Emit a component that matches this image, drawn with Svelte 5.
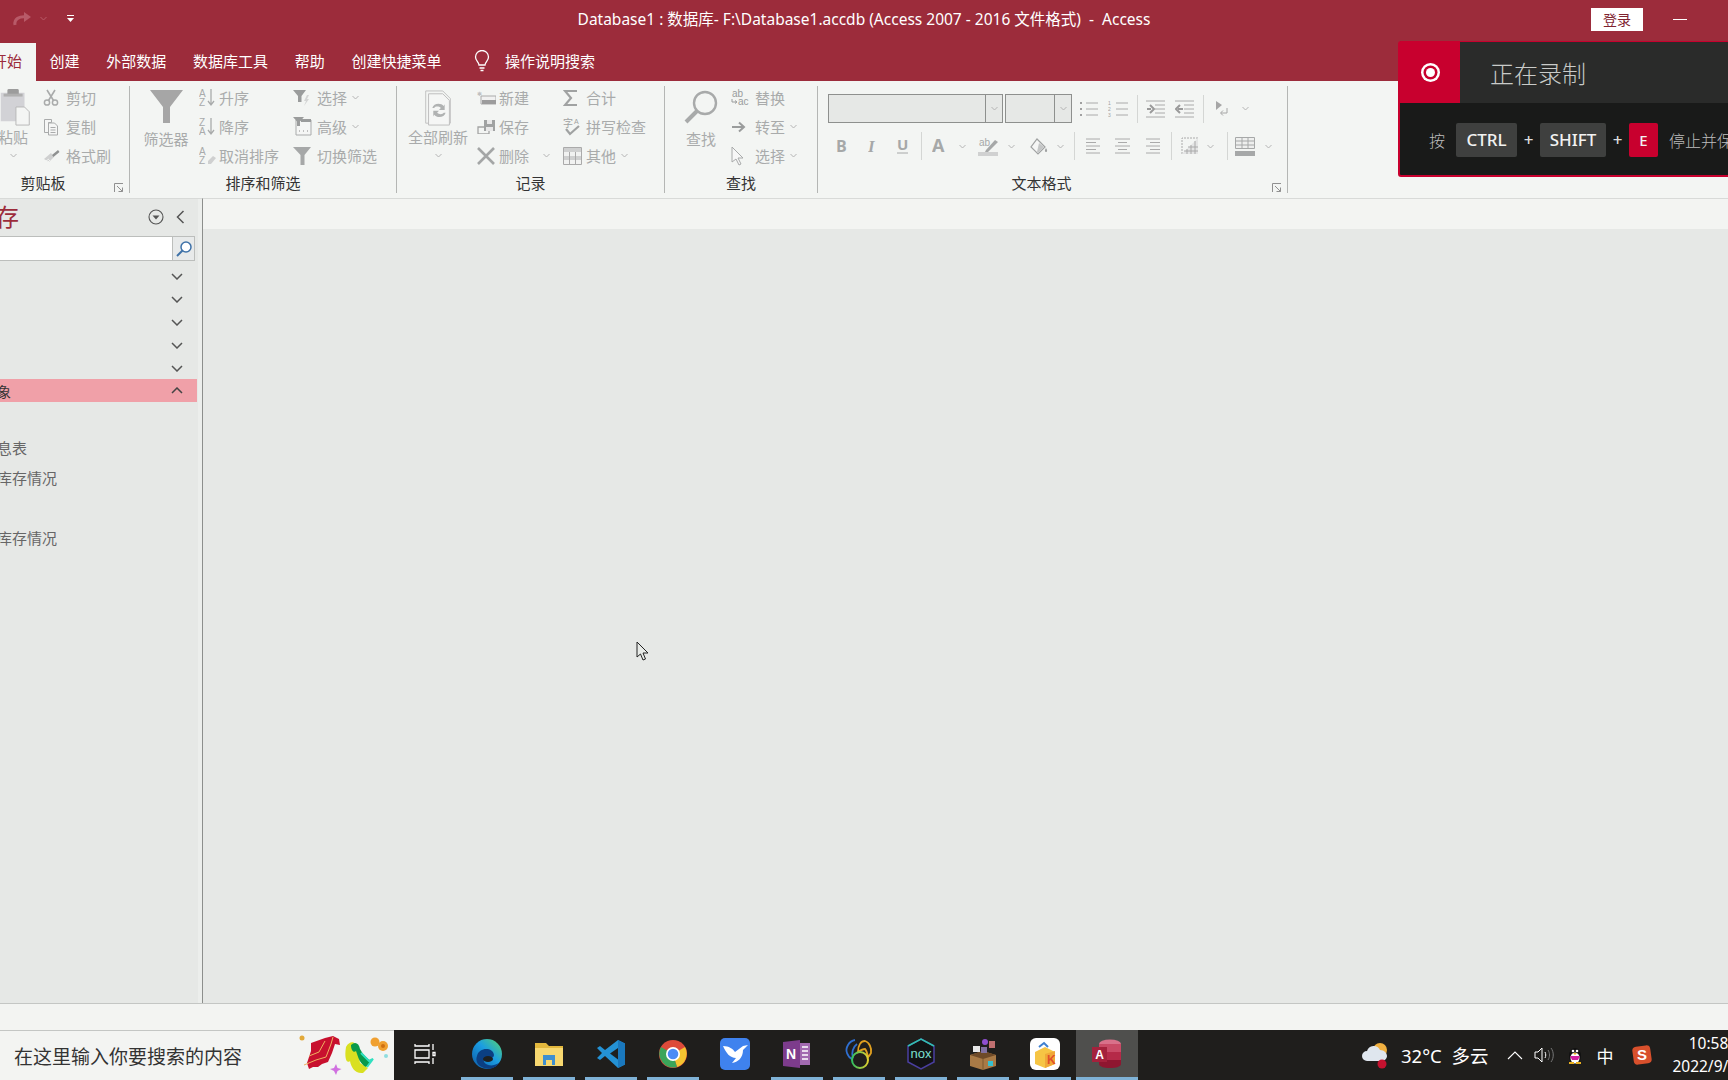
<script>
  const g = '#a9abab';
  const icons = {
    cut: `<circle cx="4" cy="13.5" r="2.6" fill="none" stroke="${g}" stroke-width="1.5"/><circle cx="12" cy="13.5" r="2.6" fill="none" stroke="${g}" stroke-width="1.5"/><path d="M5.5 11.5 12 1M10.5 11.5 4 1" stroke="${g}" stroke-width="1.6" fill="none"/>`,
    copy: `<path d="M1.5 1.5h7v3h-3v10h-4zM5.5 5h6l3 3v9h-9z" fill="#f5f6f5" stroke="${g}"/><path d="M7.5 9.5h5M7.5 12h5M7.5 14.5h5" stroke="${g}"/>`,
    brush: `<path d="M1 11 8 5l3 4-5 5z" fill="#cfd0d0"/><path d="M9 7l6-5 1.5 2-6 5z" fill="#8f9191"/><path d="M3 13l3-2M5 14l2-2" stroke="#f3f5f3"/>`,
    paste: `<rect x="2" y="5" width="25" height="30" fill="#d2d2d6"/><rect x="9" y="1" width="12" height="7" rx="1.5" fill="#9c9c9c"/><rect x="5" y="6" width="20" height="3" fill="#b0b0b0"/><path d="M18 20h9l5 5v14H18z" fill="#f4f5f4" stroke="#b6b6b6"/>`,
    funnel: `<path d="M0 0h33L20 17v16h-7V17z" fill="#a6a6a6"/>`,
    asc: `<text x="0" y="8.5" font-size="10" font-family="Liberation Sans" fill="${g}">A</text><text x="0" y="18" font-size="10" font-family="Liberation Sans" fill="${g}">Z</text><path d="M12 1v15M9 13l3 4 3-4" stroke="${g}" stroke-width="1.3" fill="none"/>`,
    desc: `<text x="0" y="8.5" font-size="10" font-family="Liberation Sans" fill="${g}">Z</text><text x="0" y="18" font-size="10" font-family="Liberation Sans" fill="${g}">A</text><path d="M12 1v15M9 13l3 4 3-4" stroke="${g}" stroke-width="1.3" fill="none"/>`,
    clearsort: `<text x="0" y="8.5" font-size="10" font-family="Liberation Sans" fill="${g}">A</text><text x="0" y="18" font-size="10" font-family="Liberation Sans" fill="${g}">Z</text><path d="M9 15l5-5 3 2-5 6h-3z" fill="#cfd0d0"/>`,
    select: `<path d="M0 1h13L8.5 7v6H5V7z" fill="#9a9c9c"/><path d="M14 6l-3 6h2l-2 5 5-7h-2l2-4z" fill="#d4d5d5"/>`,
    adv: `<path d="M3 3h15v15H3z" fill="#f5f6f5" stroke="${g}"/><path d="M8 2h10v3H8z" fill="#9a9c9c"/><path d="M0 0h11L7 4.500V9H4V4.500z" fill="#9a9c9c"/><path d="M6 14h1M10 14h1M14 14h1" stroke="#888"/>`,
    toggle: `<path d="M0 0h18L11.500 8v10h-4V8z" fill="#a6a8a8"/>`,
    refresh: `<path d="M1 1h18l8 8v26H1z" fill="none" stroke="#c0c0c0"/><path d="M4 4h15l7 7v26H4z" fill="#f5f6f5" stroke="#bcbcbc"/><path d="M8 19c1-5 9-6 12-2l1-2v6h-6l2-2c-2-2-6-2-7 0zM22 24c-1 5-9 6-12 2l-1 2v-6h6l-2 2c2 2 6 2 7 0z" fill="#b0b2b2"/>`,
    newrec: `<path d="M4 6h15v8H4z" fill="#f1f1f1" stroke="#aaa"/><path d="M5 10h14v4H5z" fill="#9c9c9c"/><text x="0" y="6" font-size="6" fill="#c0c0c0" font-family="Liberation Sans">✱</text>`,
    save: `<path d="M1 8h11v7H1z" fill="none" stroke="#a4a4a4" stroke-width="1.3"/><path d="M7 1h11v11H7z" fill="#a0a2a2"/><path d="M10 1h5v4h-5z" fill="#e8e8e8"/><path d="M9 8h7v4H9z" fill="#e8e8e8"/>`,
    del: `<path d="M1 1l16 16M17 1 1 17" stroke="#a4a6a6" stroke-width="2.6"/>`,
    sigma: `<path d="M14 2H2l6 7-6 7h12" fill="none" stroke="#a0a2a2" stroke-width="2.2"/>`,
    spell: `<text x="0" y="10" font-size="10" font-family="Noto Sans CJK SC" fill="#a0a2a2">字</text><text x="11" y="7" font-size="7" font-family="Liberation Sans" fill="#a0a2a2">A</text><path d="M3 12l4 5 9-8" fill="none" stroke="#a0a2a2" stroke-width="2.2"/>`,
    other: `<path d="M.5.500h18v17H.5z" fill="#f1f2f1" stroke="#aaa"/><path d="M1 1h17v4H1zM1 9h17v4H1z" fill="#cfd0d0"/><path d="M6.500 5v12M12.500 5v12" stroke="#aaa"/>`,
    glass: `<circle cx="21" cy="13" r="11" fill="none" stroke="#a8aaaa" stroke-width="2.4"/><path d="M13 21 2 32" stroke="#a8aaaa" stroke-width="4"/>`,
    replace: `<text x="1" y="8" font-size="10" font-family="Liberation Sans" fill="#9a9c9c">ab</text><text x="7" y="16" font-size="10" font-family="Liberation Sans" fill="#9a9c9c">ac</text><path d="M1 10v3h4M4 11.500l2 1.500-2 1.500" fill="none" stroke="#9a9c9c"/>`,
    goto: `<path d="M1 8h11M8 3.500 13 8l-5 4.500" fill="none" stroke="#9a9c9c" stroke-width="2"/>`,
    pointer: `<path d="M1 1v15l4-3 3 6 2-1-3-6h5z" fill="#f7f7f7" stroke="#a8aaaa"/>`,
    bullets: `<path d="M2 2h2v2H2zM2 8h2v2H2zM2 14h2v2H2z" fill="#a0a0a0"/><path d="M8 3h12M8 9h12M8 15h12" stroke="#aaa"/>`,
    numbers: `<text x="0" y="5" font-size="5" fill="#a0a0a0" font-family="Liberation Sans">1</text><text x="0" y="11" font-size="5" fill="#a0a0a0" font-family="Liberation Sans">2</text><text x="0" y="17" font-size="5" fill="#a0a0a0" font-family="Liberation Sans">3</text><path d="M8 3h12M8 9h12M8 15h12" stroke="#aaa"/>`,
    indent: `<path d="M0 1h19M9 5h10M9 9h10M9 13h10M0 17h19" stroke="#aaa"/><path d="M1 9h4M4 5l4 4-4 4" stroke="#9a9a9a" stroke-width="2" fill="none"/>`,
    outdent: `<path d="M0 1h19M9 5h10M9 9h10M9 13h10M0 17h19" stroke="#aaa"/><path d="M8 9H3M5 5 1 9l4 4" stroke="#9a9a9a" stroke-width="2" fill="none"/>`,
    rtl: `<path d="M1 0l6 4-6 5z" fill="#a6a6a6"/><path d="M12 7v5H6M8 9.500 5.500 12 8 14.500" fill="none" stroke="#a6a6a6"/>`,
    bold: `<text x="0" y="14" font-size="16" font-weight="700" font-family="Open Sans" fill="#a6a8a8">B</text>`,
    italic: `<text x="0" y="14" font-size="17" font-style="italic" font-weight="700" font-family="Liberation Serif" fill="#a6a8a8">I</text>`,
    under: `<text x="0" y="12" font-size="15" font-weight="700" font-family="Open Sans" fill="#a6a8a8">U</text><path d="M0 15h11" stroke="#a6a8a8"/>`,
    fontc: `<text x="0" y="14" font-size="18" font-weight="700" font-family="Open Sans" fill="#a6a8a8">A</text>`,
    hilite: `<text x="1" y="9" font-size="10" font-family="Liberation Sans" fill="#a6a8a8">ab</text><path d="M8 13 17 3l3 2-10 10H7z" fill="#a6a8a8"/><path d="M0 15h20v4H0z" fill="#d0d1d1"/>`,
    fill: `<path d="M8 1 16 9l-7 7-7-7z" fill="#f5f6f5" stroke="#a0a2a2" stroke-width="1.2"/><path d="M10 5l5 4-6 6-1-1z" fill="#c4c6c6"/><path d="M17 10c1.500 2 1.500 4 0 4s-1.500-2 0-4z" fill="#a0a2a2"/>`,
    left: `<path d="M0 1h14M0 4.500h10M0 8h14M0 11.500h10M0 15h14" stroke="#aaa"/>`,
    center: `<path d="M0 1h15M3 4.500h9M0 8h15M3 11.500h9M0 15h15" stroke="#aaa"/>`,
    right: `<path d="M0 1h14M4 4.500h10M0 8h14M4 11.500h10M0 15h14" stroke="#aaa"/>`,
    alt: `<path d="M1 17V1h16" fill="none" stroke="#aaa" stroke-dasharray="2 1"/><path d="M1 17 17 1v16z" fill="#e4e5e5"/><path d="M6 17V12M10 17V8M14 17V4M3 14h14M7 10h10" stroke="#aaa"/>`,
    grid: `<path d="M.500.500h19v11H.500z" fill="#eeefee" stroke="#a6a8a8"/><path d="M7 .500v11M13 .500v11M.500 4h19M.500 8h19" stroke="#a6a8a8"/><path d="M0 14h20v5H0z" fill="#a6a8a8"/>`
  };

  const clipboard = [['cut', 16, 18, '剪切'], ['copy', 16, 18, '复制'], ['brush', 17, 16, '格式刷']];
  const sorts = [['asc', 16, 19, '升序'], ['desc', 16, 19, '降序'], ['clearsort', 18, 19, '取消排序']];
  const filters = [['select', 17, 18, '选择', 1], ['adv', 19, 19, '高级', 1], ['toggle', 18, 18, '切换筛选']];
  const records = [['newrec', 19, 15, '新建'], ['save', 18, 15, '保存'], ['del', 18, 18, '删除', 2]];
  const totals = [['sigma', 16, 18, '合计'], ['spell', 19, 19, '拼写检查'], ['other', 19, 18, '其他', 1]];
  const finds = [['replace', 20, 17, '替换'], ['goto', 16, 16, '转至', 1], ['pointer', 14, 20, '选择', 1]];

  const fmtTop = [
    [31, 'bullets', 20, 18], [30, 'numbers', 20, 18], [8], [28, 'indent', 19, 18], [30, 'outdent', 19, 18], [8],
    [30, 'rtl', 14, 15], [16, 'v']
  ];
  const fmtBottom = [
    [26, 'bold', 11, 16], [36, 'italic', 8, 16], [24, 'under', 11, 16], [14], [22, 'fontc', 14, 16], [24, 'v'],
    [28, 'hilite', 20, 19], [18, 'v'], [36, 'fill', 19, 17], [8, 'v'], [20], [18, 'left', 14, 16], [40, 'center', 15, 16],
    [22, 'right', 14, 16], [14], [24, 'alt', 18, 18], [16, 'v'], [18], [18, 'grid', 20, 19], [28, 'v']
  ];

  const tabs = ['创建', '外部数据', '数据库工具', '帮助', '创建快捷菜单'];
  const navChevrons = [0, 1, 2, 3, 4];
</script>

{#snippet chev()}
  <svg class="chev" width="7" height="5" viewBox="0 0 7 5"><path d="M.5 1 3.500 4 6.500 1" fill="none" stroke="#b4b4b4"/></svg>
{/snippet}

{#snippet col(items, cls)}
  <div class="col {cls}">
    {#each items as [name, w, h, label, more]}
      <div class="row">
        <span class="row-ic"><svg width={w} height={h} viewBox="0 0 {w} {h}">{@html icons[name]}</svg></span>
        <span>{label}</span>
        {#if more}<span class="more more-{more}">{@render chev()}</span>{/if}
      </div>
    {/each}
  </div>
{/snippet}

{#snippet launcher()}
  <svg class="launcher" width="10" height="10" viewBox="0 0 10 10"><path d="M.5 9V.5H9M3 3l5.500 5.500M8.500 4.500v4h-4" fill="none" stroke="#909090"/></svg>
{/snippet}

{#snippet fmtRow(cells)}
  {#each cells as [w, name, iw, ih]}
    <span class="cell" style="width:{w}px">
      {#if name === 'v'}
        {@render chev()}
      {:else if name}
        <svg width={iw} height={ih} viewBox="0 0 {iw} {ih}">{@html icons[name]}</svg>
      {:else}
        <i class="vsep"></i>
      {/if}
    </span>
  {/each}
{/snippet}

<div class="app">
  <header class="titlebar">
    <div class="qat">
      <svg width="22" height="16" viewBox="0 0 22 16"><path d="M4 14c-1-6 4-9 12-8" fill="none" stroke="#b85a68" stroke-width="3"/><path d="M13 1l7 5-7 5z" fill="#b85a68"/></svg>
      <svg class="qat-v" width="7" height="5" viewBox="0 0 7 5"><path d="M.5 1 3.500 4 6.500 1" fill="none" stroke="#b85a68"/></svg>
      <svg class="qat-m" width="7" height="8" viewBox="0 0 7 8"><path d="M0 .5h7" stroke="#fff"/><path d="M0 3h7L3.500 7z" fill="#fff"/></svg>
    </div>
    <div class="title">Database1 : 数据库- F:\Database1.accdb (Access 2007 - 2016 文件格式)&nbsp; -&nbsp; Access</div>
    <div class="win">
      <button class="login">登录</button>
      <span class="minimize"></span>
    </div>
  </header>

  <nav class="tabs">
    <span class="tab active">开始</span>
    {#each tabs as t}<span class="tab">{t}</span>{/each}
    <span class="tell">
      <svg width="16" height="22" viewBox="0 0 16 22"><path d="M5 15c0-3-3.500-4-3.500-8a6.500 6.500 0 0 1 13 0c0 4-3.500 5-3.500 8z" fill="none" stroke="#fff" stroke-width="1.300"/><path d="M5.500 18h5M6.500 20.500h3" stroke="#fff" stroke-width="1.300"/></svg>
      操作说明搜索
    </span>
  </nav>

  <section class="ribbon">
    <div class="group g-clip">
      <div class="gbody">
        <div class="big big-paste">
          <svg width="34" height="40" viewBox="0 0 34 40">{@html icons.paste}</svg>
          <span>粘贴</span>
          {@render chev()}
        </div>
        {@render col(clipboard, 'c-clip')}
      </div>
      <div class="glabel">剪贴板</div>
      {@render launcher()}
    </div>

    <div class="group g-sort">
      <div class="gbody">
        <div class="big big-filter">
          <svg width="33" height="34" viewBox="0 0 33 34">{@html icons.funnel}</svg>
          <span>筛选器</span>
        </div>
        {@render col(sorts, 'c-sort')}
        {@render col(filters, 'c-filter')}
      </div>
      <div class="glabel">排序和筛选</div>
    </div>

    <div class="group g-rec">
      <div class="gbody">
        <div class="big big-refresh">
          <svg width="29" height="38" viewBox="0 0 29 38">{@html icons.refresh}</svg>
          <span>全部刷新</span>
          {@render chev()}
        </div>
        {@render col(records, 'c-rec')}
        {@render col(totals, 'c-tot')}
      </div>
      <div class="glabel">记录</div>
    </div>

    <div class="group g-find">
      <div class="gbody">
        <div class="big big-find">
          <svg width="34" height="34" viewBox="0 0 34 34">{@html icons.glass}</svg>
          <span>查找</span>
        </div>
        {@render col(finds, 'c-find')}
      </div>
      <div class="glabel">查找</div>
    </div>

    <div class="group g-text">
      <div class="fmt">
        <div class="fmt-row">
          <div class="combo c-font"><span class="drop">{@render chev()}</span></div>
          <div class="combo c-size"><span class="drop">{@render chev()}</span></div>
          {@render fmtRow(fmtTop)}
        </div>
        <div class="fmt-row second">
          {@render fmtRow(fmtBottom)}
        </div>
      </div>
      <div class="glabel">文本格式</div>
      {@render launcher()}
    </div>
  </section>

  <main class="body">
    <aside class="navpane">
      <div class="navhead">
        <span class="navtitle">存</span>
        <svg class="navmenu" width="16" height="16" viewBox="0 0 16 16"><circle cx="8" cy="8" r="7" fill="none" stroke="#555" stroke-width="1.100"/><path d="M4.500 6.500h7L8 10.500z" fill="#555"/></svg>
        <svg width="9" height="14" viewBox="0 0 9 14"><path d="M7.500 1 1.500 7l6 6" fill="none" stroke="#555" stroke-width="1.500"/></svg>
      </div>
      <div class="navsearch">
        <div class="sinput"></div>
        <div class="sbtn">
          <svg width="18" height="18" viewBox="0 0 18 18"><circle cx="11" cy="7" r="5" fill="#fff" stroke="#3f72a8" stroke-width="1.500"/><path d="M7.500 10.500 2 16" stroke="#3f72a8" stroke-width="2"/></svg>
        </div>
      </div>
      {#each navChevrons as n (n)}
        <div class="navgroup">
          <svg width="12" height="7" viewBox="0 0 12 7"><path d="M1 1l5 5 5-5" fill="none" stroke="#555" stroke-width="1.500"/></svg>
        </div>
      {/each}
      <div class="navgroup open">
        <span class="opentext">象</span>
        <svg width="12" height="7" viewBox="0 0 12 7"><path d="M1 6l5-5 5 5" fill="none" stroke="#444" stroke-width="1.500"/></svg>
      </div>
      <ul class="navitems">
        <li>息表</li>
        <li>库存情况</li>
        <li class="gap">库存情况</li>
      </ul>
    </aside>
    <div class="splitter"></div>
    <div class="workspace">
      <div class="docstrip"></div>
      <div class="docarea"></div>
    </div>
  </main>

  <div class="status"></div>

  <footer class="taskbar">
    <div class="search">
      <span>在这里输入你要搜索的内容</span>
      <svg class="deco" width="92" height="42" viewBox="0 0 92 42">
        <circle cx="3" cy="5" r="2.500" fill="#e2a93a"/>
        <path d="M12 10 26 5l8-2 6 3 1 6-5-1-3 9-4 9-6 2-4 3-5 0-4 2-2-6 2-6 2-6z" fill="#c8102e"/>
        <path d="M5 32l12-5 10-3 5-13 2-7M10 23l10-4 6-11" fill="none" stroke="#f0b060" stroke-width="1"/>
        <path d="M47 14c4-7 10-6 12 2l2 14 8 5-5 5c-8 1-12-6-13-12-3 3-6-2-4-14z" fill="#d9e021"/>
        <path d="M52 12c4-4 8-2 9 4 3 6 8 10 11 12l-5 6c-6-3-8-10-10-16-2 2-5 0-5-6z" fill="#0a9a4a"/>
        <path d="M62 20l8 8 4-2-6 8" fill="none" stroke="#30e0c0" stroke-width="2"/>
        <circle cx="76" cy="9" r="4.500" fill="#f0a030"/><circle cx="84" cy="13" r="5" fill="#f0a030"/><circle cx="84" cy="13" r="2" fill="#d07010"/>
        <circle cx="87" cy="23" r="2" fill="#8fdde0"/>
        <path d="M37 31l1.500 4 4 1-4 2-1.500 4-2-4-4-2 4-1z" fill="#d070e0"/>
      </svg>
    </div>
    <div class="tasks">
      <div class="task">
        <svg width="24" height="24" viewBox="0 0 24 24"><path d="M2 2v2h14V2M2 22v-2h14v2M2 8h14v8H2zM20 2v6M20 16v6M20 10.500h2v3h-2z" fill="none" stroke="#fff" stroke-width="1.300"/></svg>
      </div>
      <div class="task on">
        <svg width="32" height="32" viewBox="0 0 32 32"><defs><linearGradient id="edge" x1="0" y1="1" x2="1" y2="0"><stop offset="0" stop-color="#0c59a4"/><stop offset=".55" stop-color="#1b9de2"/><stop offset="1" stop-color="#58d66e"/></linearGradient></defs><circle cx="16" cy="16" r="15" fill="url(#edge)"/><path d="M6 18c2-9 16-9 17-1 0 3-4 4-7 3-3 0-5 3-1 6 3 2 8 2 13-1-3 5-10 7-15 5-6-2-9-7-7-12z" fill="#0b3f83"/><ellipse cx="17" cy="21" rx="5" ry="3" fill="#1e2020"/></svg>
      </div>
      <div class="task on">
        <svg width="30" height="28" viewBox="0 0 30 28"><path d="M1 3h11l3 3h14v20H1z" fill="#e3b83d"/><path d="M1 8h28v18H1z" fill="#f7d870"/><path d="M9 15h12v10h-3v-5h-6v5H9z" fill="#3e8fd0"/></svg>
      </div>
      <div class="task on">
        <svg width="30" height="30" viewBox="0 0 30 30"><path d="M22 1 29 4.500v21L22 29 9 17l-5 4-3-2 5-5-5-5 3-2 5 4z" fill="#2492d5"/><path d="M22 1v28l7-3.500v-21z" fill="#1a78bd"/><path d="M22 9l-8 5.500 8 6z" fill="#1e2020"/></svg>
      </div>
      <div class="task on">
        <svg width="30" height="30" viewBox="0 0 30 30"><circle cx="15" cy="15" r="14" fill="#dd4a3a"/><path d="M15 15 27 8a14 14 0 0 1-8 20z" fill="#f4c430"/><path d="M15 15l4 13A14 14 0 0 1 3 8z" fill="#3ba55a"/><circle cx="15" cy="15" r="7" fill="#fff"/><circle cx="15" cy="15" r="5.300" fill="#4b8bf5"/></svg>
      </div>
      <div class="task">
        <svg width="30" height="32" viewBox="0 0 30 32"><rect x="0" y="0" width="30" height="32" rx="5" fill="#3f82ee"/><path d="M3 8c6 0 10 3 12 6l8-6 5-1-5 5c0 8-5 12-11 13l4-5c-6 0-10-5-13-12z" fill="#fff"/></svg>
      </div>
      <div class="task on">
        <svg width="30" height="30" viewBox="0 0 30 30"><path d="M1 3 18 1v28L1 27z" fill="#7d3c8c"/><path d="M18 4h10v22H18z" fill="#a26ab0"/><path d="M20 8h6M20 12h6M20 16h6M20 20h6" stroke="#fff" stroke-width="1.500"/><text x="4" y="20" font-size="14" font-weight="700" fill="#fff" font-family="Liberation Sans">N</text></svg>
      </div>
      <div class="task on">
        <svg width="30" height="32" viewBox="0 0 30 32"><defs><linearGradient id="nav"><stop offset="0" stop-color="#30c060"/><stop offset="1" stop-color="#e0d030"/></linearGradient></defs><path d="M11 2C5 3 1 10 3 15c1 3 3 5 5 6M9 20c-2-5 0-11 4-14" fill="none" stroke="#2f6fd0" stroke-width="1.800"/><path d="M14 14c0-7 3-11 7-11 4 1 7 7 6 12-1 2-2 3-3 4-1-5-2-7-3-8-2 0-4 1-7 3z" fill="none" stroke="#e0a020" stroke-width="1.800"/><circle cx="16" cy="22" r="8" fill="none" stroke="url(#nav)" stroke-width="2"/></svg>
      </div>
      <div class="task on">
        <svg width="30" height="32" viewBox="0 0 30 32"><path d="M15 1 28 8v16l-13 7-13-7V8z" fill="#121214" stroke="#4a3fa0" stroke-width="1.500"/><path d="M2 8l13-7 13 7" fill="none" stroke="#30c0b0" stroke-width="1.500"/><text x="15" y="20" text-anchor="middle" font-size="13" font-family="Liberation Sans" fill="#7de0d0">nox</text></svg>
      </div>
      <div class="task on">
        <svg width="30" height="32" viewBox="0 0 30 32"><path d="M2 17l13-4 13 4v11l-13 4-13-4z" fill="#a87a46"/><path d="M2 17l13 4 13-4-13-4z" fill="#6e4a28"/><path d="M15 21v11" stroke="#7a5830"/><rect x="20" y="23" width="5" height="5" fill="#35c0d0"/><rect x="14" y="1" width="6" height="6" rx="3" fill="#8f4fd0"/><rect x="21" y="3" width="6" height="7" fill="#c07070"/><rect x="5" y="8" width="7" height="6" fill="#e8e8e8"/><rect x="13" y="9" width="6" height="6" fill="#8070a0"/></svg>
      </div>
      <div class="task on">
        <svg width="30" height="32" viewBox="0 0 30 32"><rect width="30" height="32" rx="6" fill="#fff"/><path d="M5 14 15 9l10 5v12l-10 4-10-4z" fill="#f6c544"/><path d="M15 16v14l10-4V13z" fill="#f0a838"/><text x="17" y="26" font-size="12" font-weight="700" fill="#e0502a" font-family="Liberation Sans">K</text><path d="M9 9l5-4 4 4" fill="none" stroke="#3f80d0" stroke-width="2"/></svg>
      </div>
      <div class="task on active">
        <svg width="30" height="30" viewBox="0 0 30 30"><ellipse cx="18" cy="5" rx="11" ry="4.500" fill="#d9708a"/><path d="M7 5h22v8H7z" fill="#c94a66"/><path d="M7 13h22v8H7z" fill="#b52a48"/><path d="M7 21h22v4c0 2.500-5 4-11 4s-11-1.500-11-4z" fill="#8f1630"/><rect x="0" y="8" width="15" height="15" fill="#a4213c"/><text x="7.500" y="20" text-anchor="middle" font-size="12" font-weight="700" fill="#fff" font-family="Liberation Sans">A</text></svg>
      </div>
    </div>
    <div class="tray">
      <svg class="wx" width="28" height="30" viewBox="0 0 28 30"><circle cx="20" cy="10" r="7" fill="#f0b040"/><path d="M7 21a5 5 0 0 1 0-10 7 7 0 0 1 13-1c4 0 7 3 7 6s-3 5-6 5z" fill="#dfe6ee"/><circle cx="22" cy="24" r="4.500" fill="#c4122f"/></svg>
      <span class="temp">32°C&nbsp; 多云</span>
      <svg class="tri" width="16" height="9" viewBox="0 0 16 9"><path d="M1 8l7-7 7 7" fill="none" stroke="#fff" stroke-width="1.100"/></svg>
      <svg class="spk" width="20" height="18" viewBox="0 0 20 18"><path d="M1 6h3l4-4v14l-4-4H1z" fill="none" stroke="#fff"/><path d="M11 6c1 2 1 4 0 6" fill="none" stroke="#fff"/><path d="M14 4c2 3 2 7 0 10M17 2c3 4 3 10 0 14" fill="none" stroke="#777"/></svg>
      <svg class="qq" width="16" height="20" viewBox="0 0 16 20"><ellipse cx="8" cy="11" rx="6" ry="8" fill="#111"/><ellipse cx="8" cy="13" rx="4.500" ry="5.500" fill="#fff"/><path d="M3 11h10l-2 4H5z" fill="#d020a0"/><circle cx="6" cy="6" r="1.300" fill="#fff"/><circle cx="10" cy="6" r="1.300" fill="#fff"/><path d="M6 8h4l-2 2z" fill="#e8b020"/><path d="M2 18h5M9 18h5" stroke="#e8b020" stroke-width="2"/></svg>
      <span class="ime">中</span>
      <svg class="sogou" width="20" height="20" viewBox="0 0 20 20"><rect x="1" y="1" width="18" height="18" rx="4" transform="rotate(-8 10 10)" fill="#d8502c"/><text x="10" y="15" text-anchor="middle" font-size="15" font-weight="700" fill="#fff" font-family="Liberation Sans">S</text></svg>
      <div class="clock"><span>10:58</span><span>2022/9/</span></div>
    </div>
  </footer>

  <div class="recording">
    <div class="rec-head">
      <span class="rec-dot"><i></i></span>
      <span class="rec-title">正在录制</span>
    </div>
    <div class="rec-body">
      <span class="rec-txt">按</span>
      <kbd class="k-ctrl">CTRL</kbd>
      <b>+</b>
      <kbd class="k-shift">SHIFT</kbd>
      <b>+</b>
      <kbd class="k-e">E</kbd>
      <span class="rec-txt">停止并保存</span>
    </div>
  </div>

  <svg class="cursor" width="14" height="20" viewBox="0 0 14 20"><path d="M1 1v15l3.500-3 2.500 6 2.500-1-2.500-6H12z" fill="#e8ebe8" stroke="#222"/></svg>
</div>

<style>
  :global(body) {
    margin: 0;
    background: #e6e8e6;
  }

  .app {
    position: relative;
    width: 1728px;
    height: 1080px;
    overflow: hidden;
    display: flex;
    flex-direction: column;
    font-family: "Noto Sans", "Noto Sans CJK SC", sans-serif;
    font-size: 15px;
    color: #a9abab;
  }

  .titlebar {
    height: 43px;
    flex: none;
    background: #9c2c3b;
    display: grid;
    grid-template-columns: 1fr auto 1fr;
    align-items: center;
    color: #fff;
  }

  .qat {
    display: flex;
    align-items: center;
    padding-left: 11px;
    margin-top: -6px;
  }

  .qat-v {
    margin-left: 7px;
  }

  .qat-m {
    margin-left: 20px;
  }

  .title {
    font-size: 15.5px;
    margin-top: -7px;
    white-space: nowrap;
  }

  .win {
    display: flex;
    justify-content: flex-end;
    align-items: center;
    gap: 30px;
    padding-right: 41px;
    margin-top: -5px;
  }

  .login {
    width: 52px;
    height: 23px;
    border: 0;
    padding: 0;
    background: #fff;
    color: #7f2230;
    font: 14px "Noto Sans CJK SC", sans-serif;
  }

  .minimize {
    width: 14px;
    height: 1px;
    background: #fff;
  }

  .tabs {
    height: 38px;
    flex: none;
    background: #9c2c3b;
    display: flex;
    align-items: center;
    color: #fff;
    font-family: "Noto Sans CJK SC", sans-serif;
    padding-left: 0;
  }

  .tab {
    padding: 0 13.4px 3px;
    line-height: 35px;
  }

  .tab.active {
    margin-left: -22px;
    padding-left: 14px;
    padding-right: 14px;
    background: #f3f5f3;
    color: #9c2c3b;
  }

  .tell {
    display: flex;
    align-items: center;
    gap: 15px;
    margin-left: 19px;
    padding-bottom: 3px;
    line-height: 35px;
  }

  .ribbon {
    height: 117px;
    flex: none;
    box-sizing: border-box;
    padding-top: 5px;
    background: #f3f5f3;
    display: flex;
    font-family: "Noto Sans CJK SC", sans-serif;
  }

  .group {
    position: relative;
    flex: none;
    height: 107px;
    box-sizing: border-box;
    border-right: 1px solid #b4b6b4;
    display: flex;
    flex-direction: column;
  }

  .g-clip { width: 130px; }
  .g-sort { width: 267px; }
  .g-rec { width: 268px; }
  .g-find { width: 153px; }
  .g-text { width: 470px; }

  .gbody {
    display: flex;
    height: 91px;
  }

  .glabel {
    text-align: center;
    color: #333;
    font-size: 15px;
    line-height: 20px;
    margin-top: 1px;
  }

  .g-clip .glabel {
    width: 86px;
  }

  .g-text .glabel {
    padding-right: 22px;
  }

  .launcher {
    position: absolute;
    right: 5px;
    bottom: 0;
  }

  .big {
    display: flex;
    flex-direction: column;
    align-items: center;
    flex: none;
    padding-top: 2px;
    line-height: 22px;
  }

  .big svg:first-child {
    flex: none;
    height: 38px;
  }

  .big > .chev {
    margin-top: 5px;
  }

  .big-paste {
    width: 26px;
    margin-right: 17px;
  }

  .big-paste svg:first-child {
    margin-left: 4px;
  }

  .big-paste span,
  .big-filter span,
  .big-refresh span,
  .big-find span {
    white-space: nowrap;
  }

  .big-filter {
    width: 46px;
    margin: 0 10px 0 13px;
  }

  .big-refresh {
    width: 60px;
    margin: 0 9px 0 11px;
  }

  .big-refresh svg:first-child {
    height: 36px;
    margin-top: 2px;
  }

  .big-find {
    width: 34px;
    margin: 0 13px 0 19px;
  }

  .big-filter svg:first-child,
  .big-find svg:first-child {
    margin-bottom: 2px;
  }

  .col {
    flex: none;
    margin-top: -3px;
  }

  .c-sort { --iw: 20px; width: 94px; }
  .c-clip { --iw: 23px; }
  .c-filter { --iw: 24px; }
  .c-rec { --iw: 22px; width: 86px; }
  .c-tot { --iw: 23px; }
  .c-find { --iw: 24px; }

  .row {
    height: 29px;
    display: flex;
    align-items: center;
    white-space: nowrap;
  }

  .row-ic {
    width: var(--iw);
    flex: none;
    display: flex;
    align-items: center;
  }

  .more {
    display: flex;
    margin-left: 5px;
  }

  .more-2 {
    margin-left: 14px;
  }

  .fmt {
    height: 91px;
    padding-left: 10px;
    box-sizing: border-box;
    padding-top: 8px;
  }

  .fmt-row {
    display: flex;
    align-items: center;
    height: 29px;
  }

  .fmt-row.second {
    height: 30px;
    margin-top: 8px;
  }

  .combo {
    height: 29px;
    box-sizing: border-box;
    border: 1px solid #8e908e;
    background: #e6e8e6;
    display: flex;
    justify-content: flex-end;
    flex: none;
  }

  .c-font {
    width: 175px;
    margin-right: 2px;
  }

  .c-size {
    width: 67px;
  }

  .drop {
    width: 16px;
    border-left: 1px solid #8e908e;
    display: flex;
    align-items: center;
    justify-content: center;
  }

  .cell {
    flex: none;
    height: 100%;
    display: flex;
    align-items: center;
    justify-content: center;
  }

  .cell svg {
    flex: none;
  }

  .vsep {
    width: 1px;
    height: 28px;
    background: #d4d6d4;
  }

  .body {
    flex: 1;
    min-height: 0;
    display: flex;
    background: #e6e8e6;
  }

  .navpane {
    width: 198px;
    flex: none;
    border-top: 1px solid #d8dad8;
    box-sizing: border-box;
    font-family: "Noto Sans CJK SC", sans-serif;
  }

  .navhead {
    height: 37px;
    display: flex;
    align-items: center;
    gap: 12px;
    padding-right: 13px;
    margin-top: -1px;
  }

  .navtitle {
    flex: 1;
    margin-left: -5px;
    margin-top: -3px;
    font-size: 24px;
    line-height: 37px;
    color: #9c2c3b;
  }

  .navsearch {
    display: flex;
    height: 25px;
    margin-top: 1px;
    width: 195px;
    box-sizing: border-box;
    border: 1px solid #bcbebc;
    border-left: 0;
  }

  .sinput {
    flex: 1;
    background: #fff;
  }

  .sbtn {
    width: 21px;
    display: flex;
    align-items: center;
    justify-content: center;
    background: #e8eaea;
    border-left: 1px solid #bcbebc;
  }

  .navgroup {
    height: 23px;
    display: flex;
    align-items: center;
    justify-content: flex-end;
    padding-right: 15px;
  }

  .navsearch + .navgroup {
    margin-top: 4px;
  }

  .navgroup.open {
    background: #f0a0a8;
    margin-top: -1px;
    margin-right: 1px;
    justify-content: space-between;
    color: #333;
    font-size: 14px;
    padding-right: 14px;
  }

  .opentext {
    margin-left: -3px;
  }

  .navitems {
    list-style: none;
    margin: 0;
    padding: 31px 0 0;
    color: #666;
  }

  .navitems li {
    height: 30px;
    line-height: 30px;
    margin-left: -3px;
  }

  .navitems .gap {
    margin-top: 30px;
  }

  .splitter {
    width: 4px;
    flex: none;
    background: #eceeec;
    border-right: 1px solid #8c8e8c;
    border-top: 1px solid #d8dad8;
  }

  .workspace {
    flex: 1;
    display: flex;
    flex-direction: column;
  }

  .docstrip {
    height: 30px;
    flex: none;
    background: #f3f4f2;
    border-top: 1px solid #d8dad8;
  }

  .docarea {
    flex: 1;
    background: #e6e8e6;
  }

  .status {
    height: 27px;
    flex: none;
    box-sizing: border-box;
    background: #f3f4f2;
    border-top: 1px solid #c4c6c4;
  }

  .taskbar {
    height: 50px;
    flex: none;
    display: flex;
    background: #1f1e1c;
    color: #fff;
    font-family: "Noto Sans CJK SC", sans-serif;
  }

  .search {
    width: 394px;
    flex: none;
    box-sizing: border-box;
    background: #f3f4f2;
    border-top: 1px solid #c4c6c4;
    color: #333;
    font-size: 19px;
    display: flex;
    align-items: center;
    padding-left: 14px;
  }

  .deco {
    margin-left: 57px;
    margin-top: -3px;
    flex: none;
  }

  .tasks {
    display: flex;
    padding-left: 0;
  }

  .task {
    width: 62px;
    box-sizing: border-box;
    display: flex;
    align-items: center;
    justify-content: center;
    padding-bottom: 2px;
    position: relative;
  }

  .task svg {
    flex: none;
  }

  .task.on::after {
    content: "";
    position: absolute;
    left: 5px;
    right: 5px;
    bottom: 0;
    height: 3px;
    background: #7fb2d6;
  }

  .task.active {
    background: #4f4f4d;
  }

  .task.active::after {
    left: 0;
    right: 0;
  }

  .tray {
    flex: 1;
    display: flex;
    align-items: center;
    position: relative;
  }

  .wx {
    margin-left: 222px;
    flex: none;
  }

  .temp {
    margin-left: 13px;
    font-size: 18.5px;
    white-space: nowrap;
    font-family: "Noto Sans", "Noto Sans CJK SC", sans-serif;
  }

  .tri {
    margin-left: 19px;
    flex: none;
  }

  .spk {
    margin-left: 11px;
    flex: none;
  }

  .qq {
    margin-left: 13px;
    flex: none;
  }

  .ime {
    margin-left: 13px;
    font-size: 17px;
  }

  .sogou {
    margin-left: 19px;
    flex: none;
  }

  .clock {
    margin-left: 20px;
    display: flex;
    flex-direction: column;
    align-items: flex-end;
    font-size: 15.5px;
    line-height: 23px;
    white-space: nowrap;
    font-family: "Noto Sans", sans-serif;
  }

  .recording {
    position: absolute;
    left: 1398px;
    top: 41px;
    width: 420px;
    height: 136px;
    box-sizing: border-box;
    border: 2px solid #c8002e;
    border-top-width: 1px;
    border-radius: 3px;
    background: #191a19;
    font-family: "Noto Sans CJK SC", sans-serif;
  }

  .rec-head {
    height: 61px;
    display: flex;
    background: #2a2b2a;
  }

  .rec-dot {
    width: 60px;
    background: #c8002e;
    display: flex;
    align-items: center;
    justify-content: center;
  }

  .rec-dot i {
    width: 9px;
    height: 9px;
    border-radius: 50%;
    background: #fff;
    box-shadow: 0 0 0 2.500px #c8002e, 0 0 0 5px #fff;
  }

  .rec-title {
    margin-left: 30px;
    font-size: 24px;
    font-weight: 300;
    line-height: 61px;
    color: #c9cbc9;
  }

  .rec-body {
    height: 72px;
    display: flex;
    align-items: center;
    padding-left: 29px;
    padding-top: 1px;
    box-sizing: border-box;
    color: #ddd;
  }

  .rec-txt {
    font-weight: 300;
    color: #bdbdbd;
    font-size: 16px;
    white-space: nowrap;
  }

  kbd {
    height: 34px;
    box-sizing: border-box;
    display: flex;
    align-items: center;
    justify-content: center;
    border-radius: 2px;
    background: #3f403f;
    color: #f2f2f2;
    font: 500 17px "Noto Sans", sans-serif;
  }

  .k-ctrl {
    width: 61px;
    margin-left: 11px;
  }

  .k-shift {
    width: 66px;
  }

  .k-e {
    width: 29px;
    background: #c8002e;
    font-size: 15px;
    margin-right: 11px;
  }

  .rec-body b {
    width: 23px;
    text-align: center;
    font: 500 17px "Noto Sans", sans-serif;
  }

  .cursor {
    position: absolute;
    left: 636px;
    top: 641px;
  }
</style>
